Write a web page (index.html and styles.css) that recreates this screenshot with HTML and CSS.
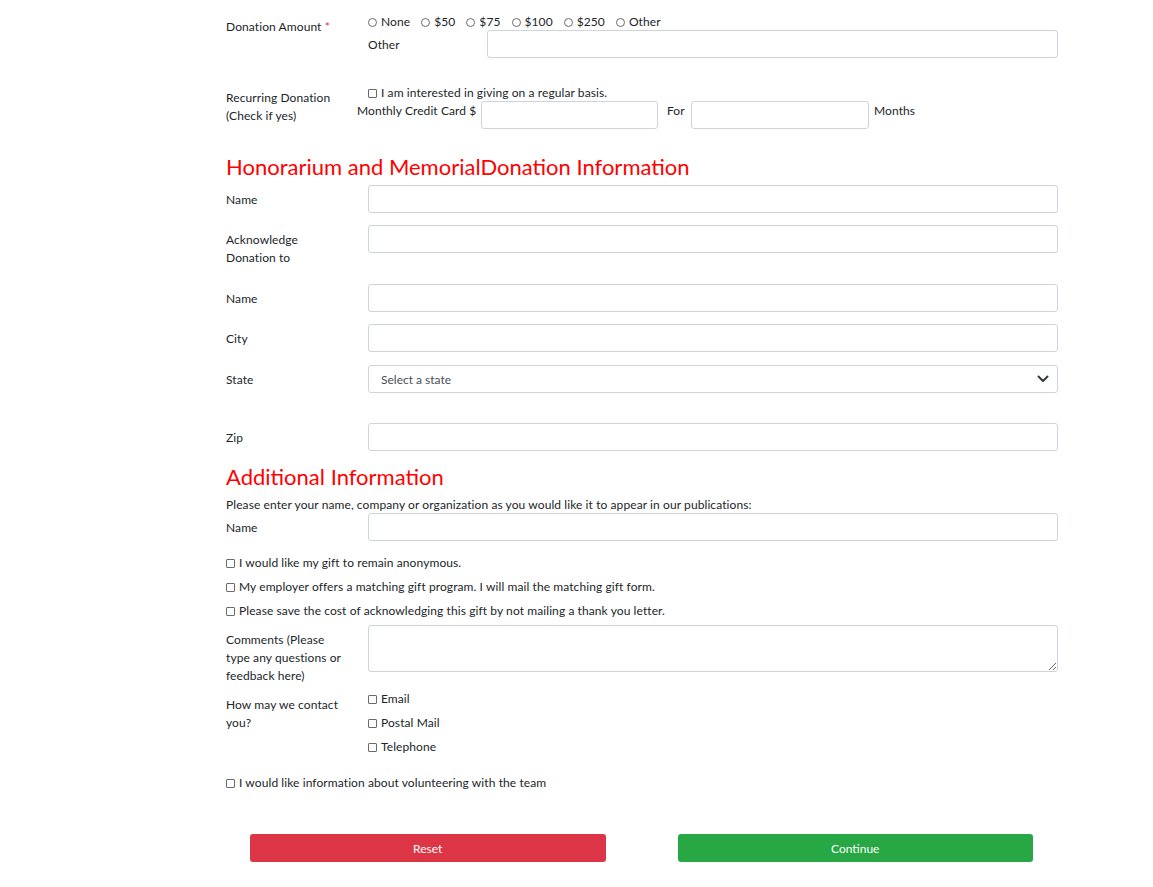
FILE: index.html
```html
<!DOCTYPE html>
<html lang="en">
<head>
<meta charset="utf-8">
<title>Donation Form</title>
<link rel="stylesheet" href="styles.css">
</head>
<body>
<form class="form">
  <div class="row row-donation">
    <label class="lbl">Donation Amount <span class="req">*</span></label>
    <div class="field">
      <div class="radios">
        <label class="opt"><input type="radio" name="amt" class="radio"> None</label>
        <label class="opt"><input type="radio" name="amt" class="radio"> $50</label>
        <label class="opt"><input type="radio" name="amt" class="radio"> $75</label>
        <label class="opt"><input type="radio" name="amt" class="radio"> $100</label>
        <label class="opt"><input type="radio" name="amt" class="radio"> $250</label>
        <label class="opt"><input type="radio" name="amt" class="radio"> Other</label>
      </div>
      <div class="sub-other">
        <label class="sub-lbl">Other</label>
        <input type="text" class="input">
      </div>
    </div>
  </div>

  <div class="row row-recurring">
    <label class="lbl">Recurring Donation<br>(Check if yes)</label>
    <div class="field">
      <label class="check-line"><input type="checkbox" class="check"> I am interested in giving on a regular basis.</label>
      <div class="sub-monthly">
        <span class="monthly-lbl">Monthly Credit Card $</span>
        <input type="text" class="input input-short">
        <span class="for-lbl">For</span>
        <input type="text" class="input input-short2">
        <span class="months-lbl">Months</span>
      </div>
    </div>
  </div>

  <h2 class="heading heading-first">Honorarium and MemorialDonation Information</h2>

  <div class="row">
    <label class="lbl">Name</label>
    <input type="text" class="input">
  </div>
  <div class="row row-ack">
    <label class="lbl">Acknowledge<br>Donation to</label>
    <input type="text" class="input">
  </div>
  <div class="row">
    <label class="lbl">Name</label>
    <input type="text" class="input">
  </div>
  <div class="row row-city">
    <label class="lbl">City</label>
    <input type="text" class="input">
  </div>
  <div class="row row-state">
    <label class="lbl">State</label>
    <div class="select-wrap">
      <select class="input select">
        <option>Select a state</option>
      </select>
      <svg class="chev" width="12" height="8" viewBox="0 0 12 8"><path d="M1.5 1.5 L6 6 L10.5 1.5" fill="none" stroke="#343a40" stroke-width="2" stroke-linecap="round" stroke-linejoin="round"/></svg>
    </div>
  </div>
  <div class="row row-zip">
    <label class="lbl">Zip</label>
    <input type="text" class="input">
  </div>

  <h2 class="heading heading-second">Additional Information</h2>
  <p class="intro">Please enter your name, company or organization as you would like it to appear in our publications:</p>
  <div class="row">
    <label class="lbl">Name</label>
    <input type="text" class="input">
  </div>

  <div class="checks">
    <label class="check-line"><input type="checkbox" class="check"> I would like my gift to remain anonymous.</label>
    <label class="check-line"><input type="checkbox" class="check"> My employer offers a matching gift program. I will mail the matching gift form.</label>
    <label class="check-line"><input type="checkbox" class="check"> Please save the cost of acknowledging this gift by not mailing a thank you letter.</label>
  </div>

  <div class="row row-comments">
    <label class="lbl">Comments (Please<br>type any questions or<br>feedback here)</label>
    <textarea class="input textarea"></textarea>
  </div>

  <div class="row row-contact">
    <label class="lbl">How may we contact<br>you?</label>
    <div class="contact-list">
      <label class="check-line"><input type="checkbox" class="check"> Email</label>
      <label class="check-line"><input type="checkbox" class="check"> Postal Mail</label>
      <label class="check-line"><input type="checkbox" class="check"> Telephone</label>
    </div>
  </div>

  <label class="check-line volunteer"><input type="checkbox" class="check"> I would like information about volunteering with the team</label>

  <div class="buttons">
    <button type="reset" class="btn btn-reset">Reset</button>
    <button type="button" class="btn btn-continue">Continue</button>
  </div>
</form>
</body>
</html>
```
FILE: styles.css
```css
html, body {
  margin: 0;
  padding: 0;
  background: #fff;
}
body {
  font-family: Lato, "Open Sans", sans-serif;
  font-size: 12px;
  line-height: 18px;
  letter-spacing: 0.09px;
  color: #212529;
}
.form {
  width: 832px;
  margin-left: 226px;
  padding-top: 12px;
}
.row {
  display: grid;
  grid-template-columns: 142px 1fr;
  align-items: start;
  margin-bottom: 12px;
}
.lbl {
  padding-top: 6px;
  padding-bottom: 4px;
  display: block;
}
.req { color: #dc3545; }

.input {
  display: block;
  box-sizing: border-box;
  width: 100%;
  height: 28px;
  margin: 0;
  border: 1px solid #ced4da;
  border-radius: 3px;
  background: #fff;
  font-family: inherit;
  font-size: 12px;
  color: #495057;
  padding: 0 12px;
  outline: none;
}

/* radios / checks */
.radios {
  display: flex;
  box-sizing: border-box;
  height: 18px;
  padding-top: 2px;
  align-items: center;
}
.opt {
  display: inline-flex;
  align-items: center;
  margin-right: 11px;
}
.radio, .check {
  appearance: none;
  -webkit-appearance: none;
  box-sizing: border-box;
  width: 9px;
  height: 9px;
  margin: 0 4px 0 0;
  border: 1px solid #6b6b6b;
  background: #fff;
  flex: none;
}
.radio { border-radius: 50%; }
.check { border-radius: 1px; }

.check-line {
  display: flex;
  box-sizing: border-box;
  align-items: center;
  height: 18px;
  padding-top: 2px;
}

.row-donation { margin-bottom: 25px; }
.sub-other {
  display: grid;
  grid-template-columns: 119px 1fr;
  align-items: center;
}
.sub-lbl { padding-top: 2px; }
.row-recurring { margin-bottom: 25px; }
.sub-monthly {
  display: flex;
  align-items: flex-start;
  margin-left: -11px;
}
.sub-monthly span { padding-top: 1px; }
.monthly-lbl {
  width: 117px;
  margin-right: 7px;
  white-space: nowrap;
}
.input-short { width: 177px; }
.input-short2 { width: 178px; }
.for-lbl {
  box-sizing: border-box;
  width: 33px;
  padding-left: 9px;
}
.months-lbl { margin-left: 5px; }

.heading {
  margin: 0 0 5px;
  color: #ff0000;
  font-weight: 400;
  font-size: 22px;
  line-height: 26px;
  letter-spacing: 0;
}

.row-ack { margin-bottom: 13px; }
.row-city { margin-bottom: 13px; }
.row-state { margin-bottom: 30px; }
.row-zip { margin-bottom: 13px; }

.select-wrap { position: relative; }
.select {
  appearance: none;
  -webkit-appearance: none;
  color: #495057;
  cursor: pointer;
}
.chev {
  position: absolute;
  right: 9px;
  top: 10px;
  pointer-events: none;
}

.intro {
  margin: 0;
  padding-top: 2px;
  line-height: 16px;
}

.checks {
  display: flex;
  flex-direction: column;
  gap: 6px;
  margin-bottom: 6px;
}

.row-comments { margin-bottom: 0; }
.textarea {
  height: 47px;
  resize: vertical;
  padding: 6px 12px;
}

.row-contact .lbl {
  padding-top: 7px;
  padding-bottom: 3px;
}
.contact-list {
  display: flex;
  flex-direction: column;
  gap: 6px;
}
.row-contact { margin-bottom: 18px; }

.buttons {
  display: flex;
  gap: 72px;
  padding: 0 25px 0 24px;
  margin-top: 43px;
}
.btn {
  flex: 1;
  height: 28px;
  border: none;
  border-radius: 3px;
  color: #fff;
  font-family: inherit;
  font-size: 12px;
  cursor: pointer;
}
.btn-reset { background: #dc3545; }
.btn-continue { background: #28a745; }
```
